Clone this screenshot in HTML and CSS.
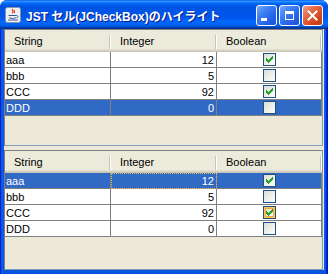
FILE: index.html
```html
<!DOCTYPE html>
<html lang="ja">
<head>
<meta charset="utf-8">
<title>JST セル(JCheckBox)のハイライト</title>
<link rel="stylesheet" href="styles.css">
</head>
<body>
<div class="window">
  <div class="titlebar">
    <svg class="app-icon" width="16" height="16" viewBox="0 0 16 16">
      <rect x="0.5" y="0.5" width="15" height="15" rx="2" fill="#eef0f4" stroke="#8a94a8"/>
      <path d="M8 2c-2 1.5 1 2.5-0.5 4.5M9.5 3c-1 1 0.8 1.6-0.3 3" stroke="#e0401c" stroke-width="1.2" fill="none"/>
      <path d="M3.5 8.5h8M4 10.5c1 1.3 6 1.3 7 0M11.5 8.5c2 0 2 2 0 2.2" stroke="#3a5a9a" stroke-width="1" fill="none"/>
      <path d="M3 13h10" stroke="#3a5a9a" stroke-width="1"/>
    </svg>
    <span class="title">JST セル(JCheckBox)のハイライト</span>
    <div class="ctrls">
      <span class="btn btn-min"><span class="glyph-min"></span></span>
      <span class="btn btn-max"><span class="glyph-max"></span></span>
      <span class="btn btn-close">
        <svg width="11" height="11" viewBox="0 0 11 11"><path d="M1.5 1.5l8 8M9.5 1.5l-8 8" stroke="#fff" stroke-width="2" stroke-linecap="square"/></svg>
      </span>
    </div>
  </div>
  <div class="client">
    <div class="pane pane-top">
      <div class="table">
        <div class="hdr"><div class="hc">String</div><div class="hc">Integer</div><div class="hc">Boolean</div></div>
        <div class="row"><div class="c">aaa</div><div class="c num">12</div><div class="c bool"><span class="cb"><svg class="chk" width="7" height="7" viewBox="0 0 7 7"><path d="M0 2h1v3H0zM1 3h1v3H1zM2 4h1v3H2zM3 3h1v3H3zM4 2h1v3H4zM5 1h1v3H5zM6 0h1v3H6z"/></svg></span></div></div>
        <div class="row"><div class="c">bbb</div><div class="c num">5</div><div class="c bool"><span class="cb"></span></div></div>
        <div class="row"><div class="c">CCC</div><div class="c num">92</div><div class="c bool"><span class="cb"><svg class="chk" width="7" height="7" viewBox="0 0 7 7"><path d="M0 2h1v3H0zM1 3h1v3H1zM2 4h1v3H2zM3 3h1v3H3zM4 2h1v3H4zM5 1h1v3H5zM6 0h1v3H6z"/></svg></span></div></div>
        <div class="row sel"><div class="c">DDD</div><div class="c num">0</div><div class="c bool"><span class="cb"></span></div></div>
      </div>
    </div>
    <div class="pane pane-bottom">
      <div class="table">
        <div class="hdr"><div class="hc">String</div><div class="hc">Integer</div><div class="hc">Boolean</div></div>
        <div class="row sel"><div class="c">aaa</div><div class="c num focus">12</div><div class="c bool"><span class="cb"><svg class="chk" width="7" height="7" viewBox="0 0 7 7"><path d="M0 2h1v3H0zM1 3h1v3H1zM2 4h1v3H2zM3 3h1v3H3zM4 2h1v3H4zM5 1h1v3H5zM6 0h1v3H6z"/></svg></span></div></div>
        <div class="row"><div class="c">bbb</div><div class="c num">5</div><div class="c bool"><span class="cb"></span></div></div>
        <div class="row"><div class="c">CCC</div><div class="c num">92</div><div class="c bool"><span class="cb hover"><svg class="chk" width="7" height="7" viewBox="0 0 7 7"><path d="M0 2h1v3H0zM1 3h1v3H1zM2 4h1v3H2zM3 3h1v3H3zM4 2h1v3H4zM5 1h1v3H5zM6 0h1v3H6z"/></svg></span></div></div>
        <div class="row"><div class="c">DDD</div><div class="c num">0</div><div class="c bool"><span class="cb"></span></div></div>
      </div>
    </div>
  </div>
</div>
</body>
</html>
```
FILE: styles.css
```css
html, body {
  margin: 0;
  padding: 0;
  background: #ffffff;
}
.window {
  width: 328px;
  height: 274px;
  box-sizing: border-box;
  display: flex;
  flex-direction: column;
  background: linear-gradient(to right, #0019cf 0, #0831d9 1px, #166aee 2px, #0855dd 3px, #0855dd 324px, #166aee 325px, #0831d9 326px, #0019cf 327px);
  border-radius: 7px 7px 0 0;
  overflow: hidden;
  padding: 0 4px 4px;
}
.titlebar {
  height: 29px;
  flex: none;
  margin: 0 -4px;
  display: flex;
  align-items: center;
  padding: 0 5px;
  background: linear-gradient(to bottom, #0058ee 0%, #3593ff 4%, #288eff 6%, #127dff 8%, #036ffc 10%, #0262ee 14%, #0057e5 20%, #0054e3 24%, #0055eb 56%, #005bf5 66%, #026afe 76%, #0062ef 86%, #0052d6 92%, #0040ab 94%, #003092 100%);
}
.app-icon {
  flex: none;
  margin-top: 1px;
}
.title {
  margin-left: 5px;
  flex: 1;
  color: #fff;
  font-family: "Liberation Sans", "Noto Sans CJK JP", sans-serif;
  font-weight: bold;
  font-size: 12px;
  text-shadow: 1px 1px 0 #0a1883;
  white-space: nowrap;
  margin-top: 1px;
}
.ctrls {
  display: flex;
  gap: 2px;
  margin-top: 2px;
}
.btn {
  width: 21px;
  height: 21px;
  box-sizing: border-box;
  border: 1px solid #fff;
  border-radius: 3px;
  display: flex;
  align-items: center;
  justify-content: center;
  background: linear-gradient(135deg, #7aa9fb 0%, #3c7ff2 35%, #2563e8 70%, #1b4fd4 100%);
}
.btn-close {
  background: linear-gradient(135deg, #f0a38a 0%, #e46a45 35%, #d5461d 70%, #c13a14 100%);
}
.glyph-min {
  width: 6px;
  height: 3px;
  background: #fff;
  margin: 8px 5px 0 0;
}
.glyph-max {
  width: 9px;
  height: 9px;
  box-sizing: border-box;
  border: 1px solid #fff;
  border-top-width: 3px;
}
.client {
  flex: 1;
  background: #ece9d8;
  display: flex;
  flex-direction: column;
  gap: 4px;
  font-family: "Liberation Sans", "Noto Sans CJK JP", sans-serif;
  font-size: 11px;
}
.pane {
  box-sizing: border-box;
  border: 1px solid #7f9db9;
  border-top-color: #808080;
  border-left-color: #808080;
  margin-right: 1px;
  background: #ece9d8;
}
.pane-top {
  height: 117px;
}
.pane-bottom {
  height: 120px;
}
.table {
  display: grid;
  grid-template-columns: 106px 106px 105px;
}
.hdr, .row {
  display: contents;
}
.hc {
  height: 22px;
  box-sizing: border-box;
  padding-left: 9px;
  padding-top: 5px;
  color: #000;
  background: #ebeadb;
  box-shadow: inset 0 -1px 0 #cbc7b8, inset 0 -2px 0 #d6d2c2, inset 0 -3px 0 #e2dfd2;
  position: relative;
}
.hc::after {
  content: "";
  position: absolute;
  right: 1px;
  top: 5px;
  bottom: 3px;
  width: 1px;
  background: #c7c5b2;
  box-shadow: 1px 0 0 #fff;
}
.c {
  height: 16px;
  box-sizing: border-box;
  border-right: 1px solid #808080;
  border-bottom: 1px solid #808080;
  background: #fff;
  color: #000;
  padding: 1px 2px 0 1px;
  line-height: 14px;
  white-space: nowrap;
}
.num {
  text-align: right;
}
.bool {
  display: flex;
  justify-content: center;
  align-items: center;
  padding: 0;
}
.sel .c {
  background: #316ac5;
  color: #fff;
}
.focus {
  outline: 1px dotted #d9b76c;
  outline-offset: -1px;
}
.cb {
  width: 13px;
  height: 13px;
  box-sizing: border-box;
  border: 1px solid #1c5180;
  background: linear-gradient(135deg, #dcdcd7 0%, #f4f4f0 70%, #ffffff 100%);
  display: flex;
  align-items: center;
  justify-content: center;
}
.cb.hover {
  box-shadow: inset 0 0 0 1px #fbc85b, inset 0 0 0 2px #f6a73a;
}
.chk {
  fill: #21a121;
  shape-rendering: crispEdges;
}
```
